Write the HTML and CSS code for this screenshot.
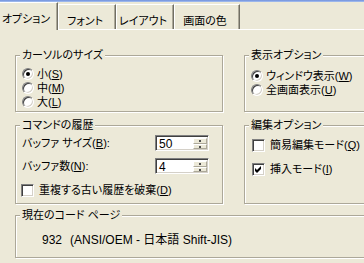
FILE: index.html
```html
<!DOCTYPE html>
<html lang="ja">
<head>
<meta charset="utf-8">
<title>プロパティ</title>
<link rel="stylesheet" href="styles.css">
</head>
<body>
<div class="frame-top"></div>
<div class="tabs">
  <div class="tab tab-1 active">オプション</div>
  <div class="tab tab-2">フォント</div>
  <div class="tab tab-3">レイアウト</div>
  <div class="tab tab-4">画面の色</div>
</div>
<div class="panel">
  <div class="grid">
    <section class="group g-cursor">
      <div class="legend">カーソルのサイズ</div>
      <div class="opt"><span class="radio on"></span>小(<u>S</u>)</div>
      <div class="opt"><span class="radio"></span>中(<u>M</u>)</div>
      <div class="opt"><span class="radio"></span>大(<u>L</u>)</div>
    </section>
    <section class="group g-display">
      <div class="legend">表示オプション</div>
      <div class="opt"><span class="radio on"></span>ウィンドウ表示(<u>W</u>)</div>
      <div class="opt"><span class="radio"></span>全画面表示(<u>U</u>)</div>
    </section>
    <section class="group g-history">
      <div class="legend">コマンドの履歴</div>
      <div class="field">
        <span class="lbl">バッファ サイズ(<u>B</u>):</span>
        <span class="spin"><span class="val">50</span><span class="btns"><i class="up"></i><i class="dn"></i></span></span>
      </div>
      <div class="field">
        <span class="lbl">バッファ数(<u>N</u>):</span>
        <span class="spin"><span class="val">4</span><span class="btns"><i class="up"></i><i class="dn"></i></span></span>
      </div>
      <div class="opt chk-row"><span class="check"></span>重複する古い履歴を破棄(<u>D</u>)</div>
    </section>
    <section class="group g-edit">
      <div class="legend">編集オプション</div>
      <div class="opt chk-row"><span class="check"></span>簡易編集モード(<u>Q</u>)</div>
      <div class="opt chk-row"><span class="check"><svg width="13" height="13" viewBox="0 0 13 13"><polygon points="3,5 5,7 9,3 9,6 5,10 3,8" fill="#000"/></svg></span>挿入モード(<u>I</u>)</div>
    </section>
  </div>
  <section class="group g-code">
    <div class="legend">現在のコード ページ</div>
    <div class="code"><span>932</span><span class="code-name">(ANSI/OEM - 日本語 Shift-JIS)</span></div>
  </section>
</div>
</body>
</html>
```
FILE: styles.css
```css
html, body {
  margin: 0;
  padding: 0;
}
body {
  background: #ECE9D8;
  color: #000;
  font-family: "Liberation Sans", "Noto Sans CJK JP", sans-serif;
  font-size: 11px;
  line-height: 14px;
  font-feature-settings: "palt";
  width: 364px;
  height: 263px;
  overflow: hidden;
}
u {
  text-decoration: underline;
  text-underline-offset: 1px;
}

.frame-top {
  height: 2px;
  background: linear-gradient(#6e8fdc, #a9c2f0);
}

/* tabs */
.tabs {
  display: flex;
  align-items: flex-end;
  height: 27px;
}
.tab {
  box-sizing: border-box;
  height: 25px;
  padding: 9px 4px 0 0;
  text-align: center;
  white-space: nowrap;
  border-top: 1px solid #fff;
  border-left: 1px solid #fff;
  border-right: 1px solid #716f64;
  box-shadow: inset -1px 0 0 #aca899;
  background: #ECE9D8;
}
.tab.active {
  position: relative;
  z-index: 1;
  height: 28px;
  margin-bottom: -1px;
}
.tab-1 { width: 60px; margin-left: -2px; }
.tab-2 { width: 58px; }
.tab-3 { width: 58px; }
.tab-4 { width: 66px; }

/* panel */
.panel {
  border-top: 1px solid #fff;
  padding: 25px 0 0 15px;
  width: 420px;
}
.grid {
  display: grid;
  grid-template-columns: 208px 160px;
  grid-template-rows: 57px 79px;
  column-gap: 21px;
  row-gap: 13px;
}
.group {
  position: relative;
  box-sizing: border-box;
  border: 1px solid #aca899;
  box-shadow: inset 1px 1px 0 #fff, 1px 1px 0 #fff;
  padding: 0 0 0 6px;
}
.legend {
  position: absolute;
  top: -8px;
  left: 4px;
  padding: 0 2px;
  background: #ECE9D8;
  white-space: nowrap;
}

.opt {
  display: flex;
  align-items: center;
  height: 14px;
  white-space: nowrap;
}
.g-cursor { padding-top: 11px; }
.g-display { padding-top: 13px; }

.radio {
  position: relative;
  box-sizing: border-box;
  width: 12px;
  height: 12px;
  margin-right: 3px;
  border-radius: 50%;
  background: #fff;
  border: 1px solid;
  border-color: #808080 #fff #fff #808080;
  box-shadow: inset 1px 1px 0 #404040, inset -1px -1px 0 #d4d0c8;
  flex: none;
}
.radio.on::after {
  content: "";
  position: absolute;
  left: 3px;
  top: 3px;
  width: 4px;
  height: 4px;
  border-radius: 50%;
  background: #000;
}

.check {
  box-sizing: border-box;
  width: 13px;
  height: 13px;
  margin-right: 5px;
  background: #fff;
  border: 1px solid;
  border-color: #808080 #fff #fff #808080;
  box-shadow: inset 1px 1px 0 #404040, inset -1px -1px 0 #d4d0c8;
  flex: none;
  position: relative;
}
.check svg {
  position: absolute;
  left: -1px;
  top: -1px;
}

.g-history { padding-top: 9px; }
.field {
  display: flex;
  align-items: center;
  height: 16px;
  margin-bottom: 7px;
}
.lbl {
  width: 133px;
  white-space: nowrap;
}
.spin {
  box-sizing: border-box;
  display: flex;
  width: 54px;
  height: 16px;
  background: #fff;
  border: 1px solid;
  border-color: #808080 #fff #fff #808080;
  box-shadow: inset 1px 1px 0 #404040, inset -1px -1px 0 #d4d0c8;
  padding: 2px 1px 1px 2px;
  font-size: 12px;
}
.val {
  flex: 1;
  line-height: 12px;
  padding-left: 1px;
}
.btns {
  display: flex;
  flex-direction: column;
  width: 14px;
}
.btns i {
  position: relative;
  box-sizing: border-box;
  height: 6px;
  background: #ECE9D8;
  border: 1px solid;
  border-color: #fff #aca899 #aca899 #fff;
}
.btns i::after {
  content: "";
  position: absolute;
  left: 5px;
  top: 1px;
  width: 2px;
  height: 2px;
  background: #4d4d4d;
}
.g-history .chk-row {
  margin-top: 9px;
  padding-left: 0;
}
.g-history .check { margin-left: -1px; }

.g-edit { padding-top: 12px; }
.g-edit .chk-row + .chk-row { margin-top: 10px; }
.g-edit .check { margin-left: 1px; margin-right: 5px; }

.g-code {
  margin-top: 11px;
  width: 400px;
  height: 43px;
  padding: 17px 0 0 26px;
}
.code {
  white-space: nowrap;
  font-size: 12px;
}
.code-name {
  margin-left: 8px;
}
```
